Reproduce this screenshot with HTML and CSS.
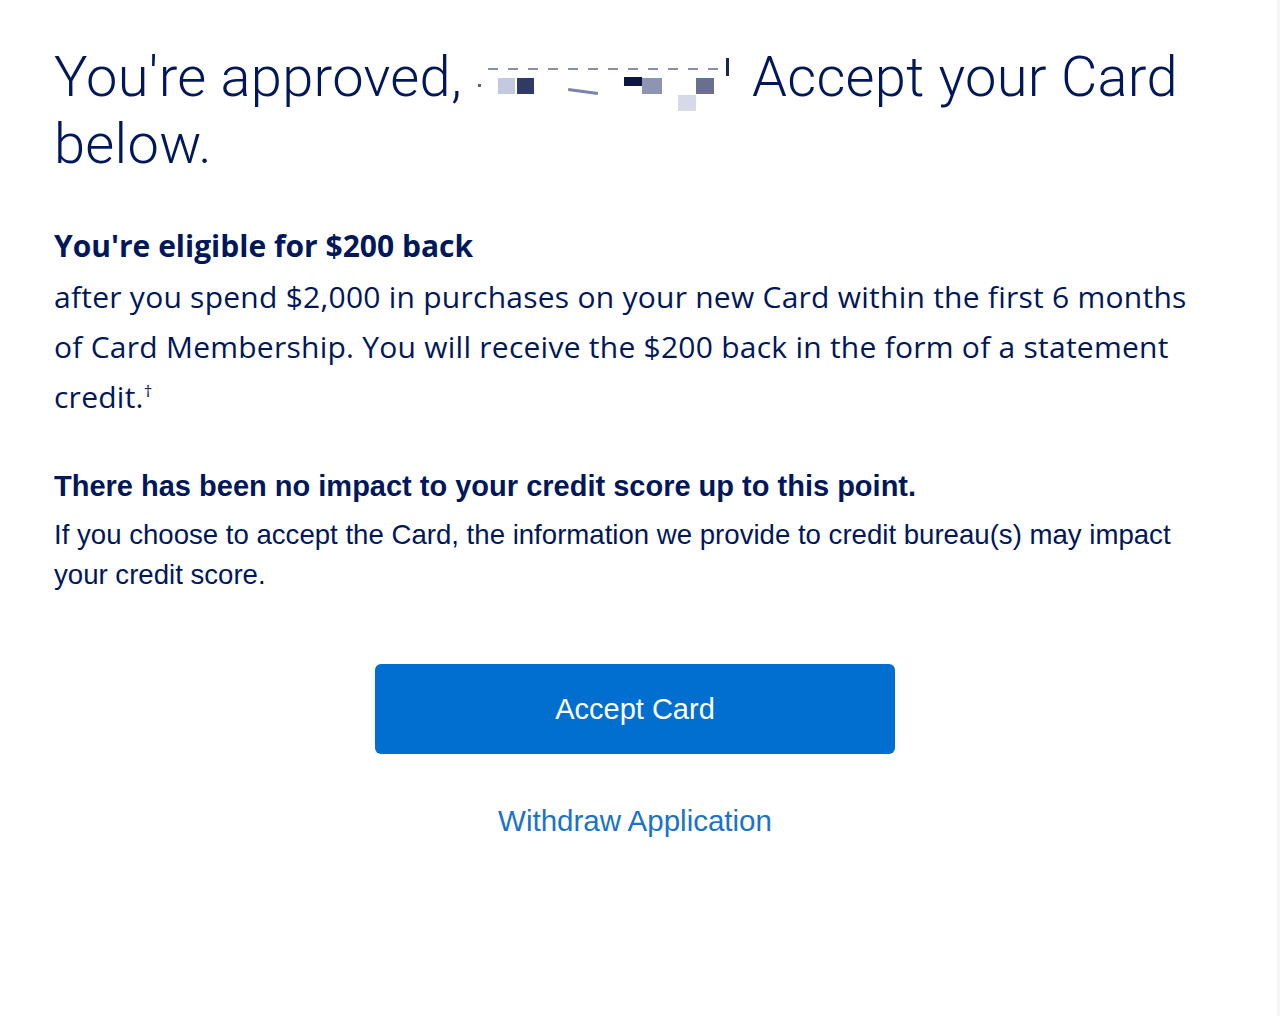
FILE: index.html
```html
<!DOCTYPE html>
<html>
<head>
  <title>Accept your Card</title>
  <link rel="stylesheet" href="styles.css">
</head>
<body>
  <div class="page">
    <h1 class="title">You're approved, <span class="redacted"><i class="px dot"></i><i class="px b1"></i><i class="px b2"></i><i class="px dash"></i><i class="px smudge"></i><i class="px b3"></i><i class="px b4"></i><i class="px b5"></i><i class="px b6"></i><i class="px tick"></i></span> Accept your Card below.</h1>

    <div class="offer">
      <h2 class="offer-title">You're eligible for $200 back</h2>
      <p class="offer-text">after you spend $2,000 in purchases on your new Card within the first 6 months of Card Membership. You will receive the $200 back in the form of a statement credit.<sup>†</sup></p>
    </div>

    <div class="notice">
      <h3 class="notice-title">There has been no impact to your credit score up to this point.</h3>
      <p class="notice-text">If you choose to accept the Card, the information we provide to credit bureau(s) may impact your credit score.</p>
    </div>

    <div class="actions">
      <button class="accept-btn">Accept Card</button>
      <a class="withdraw" href="#">Withdraw Application</a>
    </div>
  </div>
</body>
</html>
```

FILE: styles.css
```css
html, body {
  margin: 0;
  padding: 0;
  background: #fff;
  color: #00175a;
}

body {
  min-height: 1016px;
  border-right: 3px solid #f4f4f6;
  box-sizing: border-box;
}

.page {
  padding: 44px 61px 0 54px;
}

.title {
  font-family: Roboto, "Liberation Sans", sans-serif;
  font-weight: 300;
  font-size: 56px;
  line-height: 67px;
  letter-spacing: 0.3px;
  margin: 0;
  max-width: 1140px;
}

.redacted {
  display: inline-block;
  position: relative;
  width: 262px;
  height: 40px;
  vertical-align: -2px;
}

.px {
  position: absolute;
  display: block;
}

.px.dot { left: 2px; top: 26px; width: 3px; height: 3px; background: #5a6080; }
.px.b1 { left: 22px; top: 20px; width: 17px; height: 16px; background: #c3c9de; }
.px.b2 { left: 41px; top: 20px; width: 17px; height: 16px; background: #2f3a66; }
.px.dash { left: 12px; top: 10px; width: 236px; height: 2px; background: repeating-linear-gradient(90deg, #8a8fa8 0 10px, transparent 10px 20px); }
.px.smudge { left: 92px; top: 32px; width: 30px; height: 3px; background: #7c83a2; transform: rotate(8deg); }
.px.b3 { left: 148px; top: 19px; width: 18px; height: 9px; background: #0c1642; }
.px.b4 { left: 166px; top: 20px; width: 20px; height: 16px; background: #8e95b3; }
.px.b5 { left: 220px; top: 20px; width: 18px; height: 16px; background: #6a6f92; }
.px.b6 { left: 202px; top: 37px; width: 18px; height: 16px; background: #d6dae8; }
.px.tick { left: 250px; top: 0; width: 3px; height: 18px; background: #1a2456; }

.offer {
  margin-top: 48px;
}

.offer-title {
  font-family: "Open Sans", "Liberation Sans", sans-serif;
  font-weight: 700;
  font-size: 30px;
  line-height: 40px;
  margin: 0;
}

.offer-text {
  font-family: "Open Sans", "Liberation Sans", sans-serif;
  font-size: 30px;
  line-height: 50px;
  letter-spacing: 0.25px;
  margin: 6px 0 0;
}

.offer-text sup {
  font-size: 17px;
  line-height: 0;
}

.notice {
  margin-top: 44px;
}

.notice-title {
  font-family: "Liberation Sans", Arial, sans-serif;
  font-weight: 700;
  font-size: 29px;
  line-height: 40px;
  margin: 0;
}

.notice-text {
  font-family: "Liberation Sans", Arial, sans-serif;
  font-size: 27.6px;
  line-height: 40px;
  margin: 9px 0 0;
}

.actions {
  display: flex;
  flex-direction: column;
  align-items: center;
  margin-top: 69px;
}

.accept-btn {
  width: 520px;
  height: 90px;
  background: #006fcf;
  color: #fff;
  border: none;
  border-radius: 6px;
  font-family: "Liberation Sans", Arial, sans-serif;
  font-size: 29px;
}

.withdraw {
  margin-top: 50px;
  font-family: "Liberation Sans", Arial, sans-serif;
  font-size: 29.5px;
  line-height: 34px;
  color: #1a73c8;
  text-decoration: none;
}
```
